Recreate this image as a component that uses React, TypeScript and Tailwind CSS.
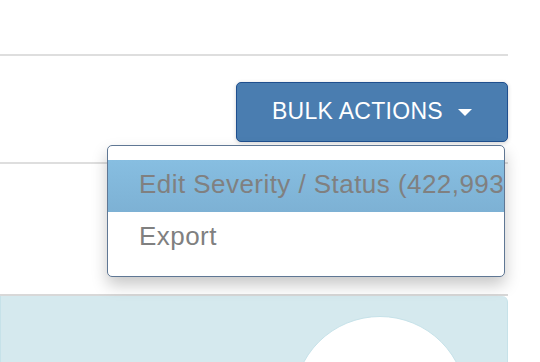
import React from "react";

export default function App() {
  return (
    <div className="h-[362px] w-[540px] overflow-hidden bg-white font-['Liberation_Sans',Arial,sans-serif]">
      <div className="w-[508px]">
        <div className="h-[54px]" />
        <div className="h-[2px] bg-[#dedede]" />
        <div className="flex justify-end pt-[26px]">
          <div className="relative">
            <button className="flex h-[60px] w-[272px] items-center justify-center gap-[15px] rounded-[5px] border-[1.5px] border-[#1f4f8e] bg-[#4a7db0] pb-[1px] text-[23px] tracking-[0.3px] text-white shadow-[0_1px_4px_rgba(0,0,0,0.18)]">
              <span>BULK ACTIONS</span>
              <svg width="14" height="7" viewBox="0 0 14 7" className="mt-[1px]">
                <polygon points="0,0 14,0 7,7" fill="#ffffff" />
              </svg>
            </button>
            <div className="absolute right-[3px] top-[63px] z-10 w-[398px] overflow-hidden whitespace-nowrap rounded-[5px] border-[1.5px] border-[#5f7794] bg-white pt-[14px] pb-[12px] text-[26px] tracking-[0.45px] text-[#808080] shadow-[0_8px_16px_rgba(0,0,0,0.22)]">
              <div className="h-[52px] bg-gradient-to-b from-[#87bee1] to-[#7db1d4] pl-[31px] leading-[49px]">
                Edit Severity / Status (422,993 items)
              </div>
              <div className="h-[52px] pl-[31px] leading-[49px]">Export</div>
            </div>
          </div>
        </div>
        <div className="mt-[20px] h-[2px] bg-[#dedede]" />
        <div className="h-[130px]" />
        <div className="h-[2px] bg-[#d8d8d8]" />
        <div className="flex h-[140px] justify-end rounded-tr-[6px] border border-t-0 border-[#c6e2e9] bg-[#d5e9ee] pr-[40px] pt-[20px]">
          <div className="h-[174px] w-[174px] shrink-0 rounded-full border-[1.5px] border-[#c6e2e9] bg-white" />
        </div>
      </div>
    </div>
  );
}
